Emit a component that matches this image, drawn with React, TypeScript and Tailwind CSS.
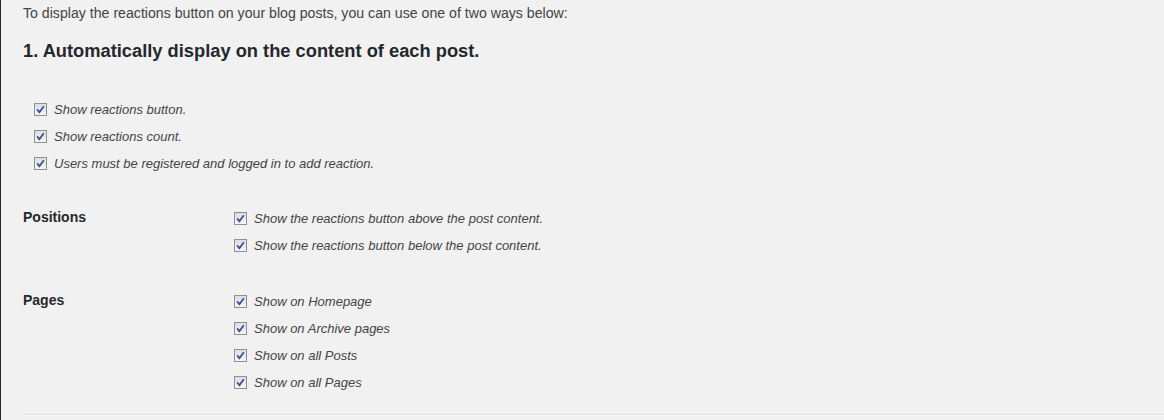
function Check() {
    return (
        <svg width="13" height="13" viewBox="0 0 13 13" className="shrink-0 block">
            <defs>
                <linearGradient id="cb" x1="0" y1="0" x2="0" y2="1">
                    <stop offset="0" stopColor="#dcdcdc" />
                    <stop offset="1" stopColor="#f7f7f7" />
                </linearGradient>
            </defs>
            <rect x="0.5" y="0.5" width="12" height="12" fill="url(#cb)" stroke="#8e8f8f" />
            <path d="M3.2 6.4 L5.4 9.2 L9.8 3.2" fill="none" stroke="#3a4f9b" strokeWidth="1.8" />
        </svg>
    )
}

function Option(props: { label: string }) {
    return (
        <label className="flex items-center h-[27px] gap-[7px]">
            <Check />
            <span className="italic text-[13px] text-[#444]">{props.label}</span>
        </label>
    )
}

function Row(props: { title: string, items: string[], className?: string }) {
    return (
        <div className={`flex ${props.className ?? ""}`}>
            <div className="w-[211px] shrink-0 h-[27px] flex items-center -mt-[1px] text-[14px] font-bold text-[#23282d]">{props.title}</div>
            <div className="flex flex-col">
                {props.items.map((t) => <Option key={t} label={t} />)}
            </div>
        </div>
    )
}

export default function App() {
    return (
        <div className="min-h-[420px] bg-[#f1f1f1] border-l border-[#23282d] pl-[22px] pr-0 font-['Liberation_Sans',Arial,sans-serif] overflow-hidden">
            <p className="pt-[4px] text-[14.15px] leading-[18px] text-[#444]">To display the reactions button on your blog posts, you can use one of two ways below:</p>
            <h2 className="mt-[17px] text-[18.3px] leading-[24px] font-bold text-[#23282d]">1. Automatically display on the content of each post.</h2>

            <div className="mt-[33px] pl-[11px] flex flex-col">
                <Option label="Show reactions button." />
                <Option label="Show reactions count." />
                <Option label="Users must be registered and logged in to add reaction." />
            </div>

            <Row className="mt-[28px]" title="Positions" items={["Show the reactions button above the post content.", "Show the reactions button below the post content."]} />
            <Row className="mt-[29px]" title="Pages" items={["Show on Homepage", "Show on Archive pages", "Show on all Posts", "Show on all Pages"]} />

            <hr className="mt-[18px] border-0 border-t border-t-[#dddddd] border-b border-b-[#fafafa]" />
        </div>
    )
}
